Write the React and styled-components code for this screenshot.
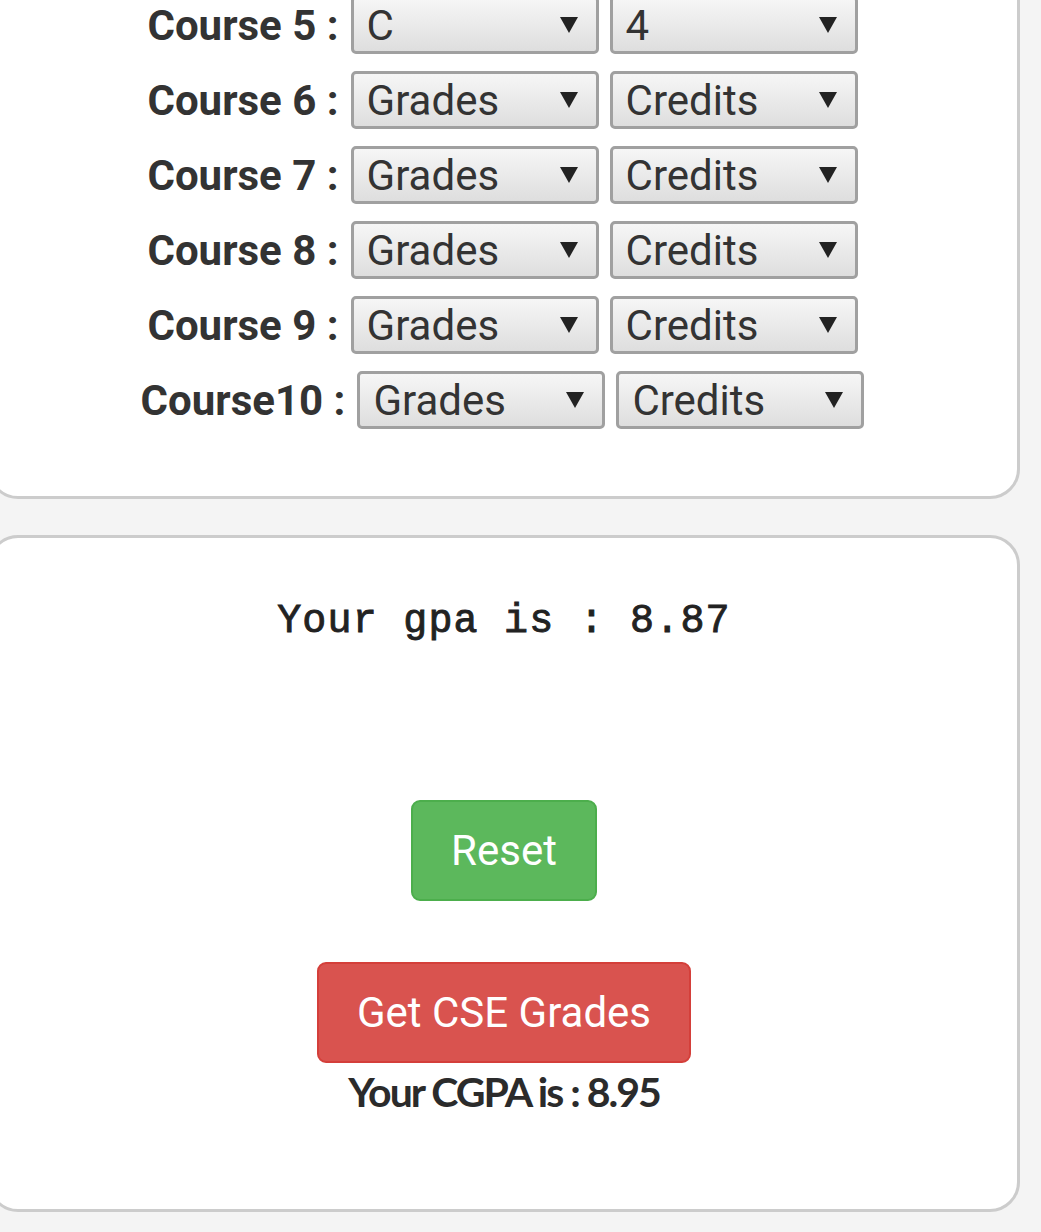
import React from 'react'
import styled, { createGlobalStyle } from 'styled-components'

const GlobalStyle = createGlobalStyle`
    html, body {
        margin: 0;
        padding: 0;
        background: #f4f4f4;
        overflow: hidden;
    }
`;

const Page = styled.div`
    margin: -40px 0 0 -12px;
    padding: 0 21px 21px 0;
    font-family: Roboto, "Liberation Sans", sans-serif;
    color: #333;
`;

const Card = styled.div`
    background: #fff;
    border: 3px solid #cccccc;
    border-radius: 30px;
    padding: ${p => p.pad};
    margin-top: ${p => p.gap || 0};
    display: flex;
    flex-direction: column;
    align-items: center;
`;

const Rows = styled.div`
    display: flex;
    flex-direction: column;
    align-items: center;
    gap: 17px;
    margin-left: -3px;
`;

const Row = styled.div`
    display: flex;
    align-items: center;
    gap: 12px;
`;

const Pair = styled.div`
    display: flex;
    gap: 11px;
`;

const Label = styled.span`
    font-weight: 700;
    font-size: 42px;
    line-height: 57px;
`;

const Select = styled.div`
    box-sizing: border-box;
    width: 248px;
    height: 58px;
    border: 3px solid #a0a0a0;
    border-radius: 5px;
    background: linear-gradient(#f6f6f6, #dedede);
    display: flex;
    align-items: center;
    justify-content: space-between;
    padding: 0 18px 0 13px;
    font-size: 42px;
    color: #333;
`;

const Arrow = styled.svg`
    width: 18px;
    height: 16px;
    fill: #222;
`;

const Gpa = styled.div`
    font-family: "Liberation Mono", "DejaVu Sans Mono", monospace;
    font-size: 40px;
    letter-spacing: 1.2px;
    line-height: 48px;
    font-weight: 400;
    -webkit-text-stroke: 0.9px #222;
    color: #222;
`;

const Button = styled.button`
    font-family: Roboto, "Liberation Sans", sans-serif;
    font-size: 42px;
    line-height: 57px;
    color: #fff;
    border-radius: 9px;
    padding: 20px ${p => p.px}px;
    border: 2px solid ${p => p.edge};
    background: ${p => p.bg};
    margin-top: ${p => p.top}px;
`;

const Cgpa = styled.div`
    font-family: Lato, "Open Sans", sans-serif;
    font-weight: 700;
    font-size: 41px;
    letter-spacing: -2px;
    line-height: 50px;
    margin-top: 4px;
    color: #2b2b2b;
`;

const Dropdown = ({ value }) => (
    <Select>
        <span>{value}</span>
        <Arrow viewBox="0 0 18 16"><path d="M0 0 H18 L9 16 Z" /></Arrow>
    </Select>
);

const courses = [
    ['Course 5 :', 'C', '4'],
    ['Course 6 :', 'Grades', 'Credits'],
    ['Course 7 :', 'Grades', 'Credits'],
    ['Course 8 :', 'Grades', 'Credits'],
    ['Course 9 :', 'Grades', 'Credits'],
    ['Course10 :', 'Grades', 'Credits'],
];

const App = () => {
    return (
        <Page>
            <GlobalStyle />
            <Card pad="33px 0 67px">
                <Rows>
                    {courses.map(([label, grade, credit]) => (
                        <Row key={label}>
                            <Label>{label}</Label>
                            <Pair>
                                <Dropdown value={grade} />
                                <Dropdown value={credit} />
                            </Pair>
                        </Row>
                    ))}
                </Rows>
            </Card>
            <Card gap="36px" pad="60px 0 92px">
                <Gpa>Your gpa is : 8.87</Gpa>
                <Button bg="#5cb85c" edge="#4cae4c" px={38} top={154}>Reset</Button>
                <Button bg="#d9534f" edge="#d43f3a" px={38} top={61}>Get CSE Grades</Button>
                <Cgpa>Your CGPA is : 8.95</Cgpa>
            </Card>
        </Page>
    )
}

export default App
